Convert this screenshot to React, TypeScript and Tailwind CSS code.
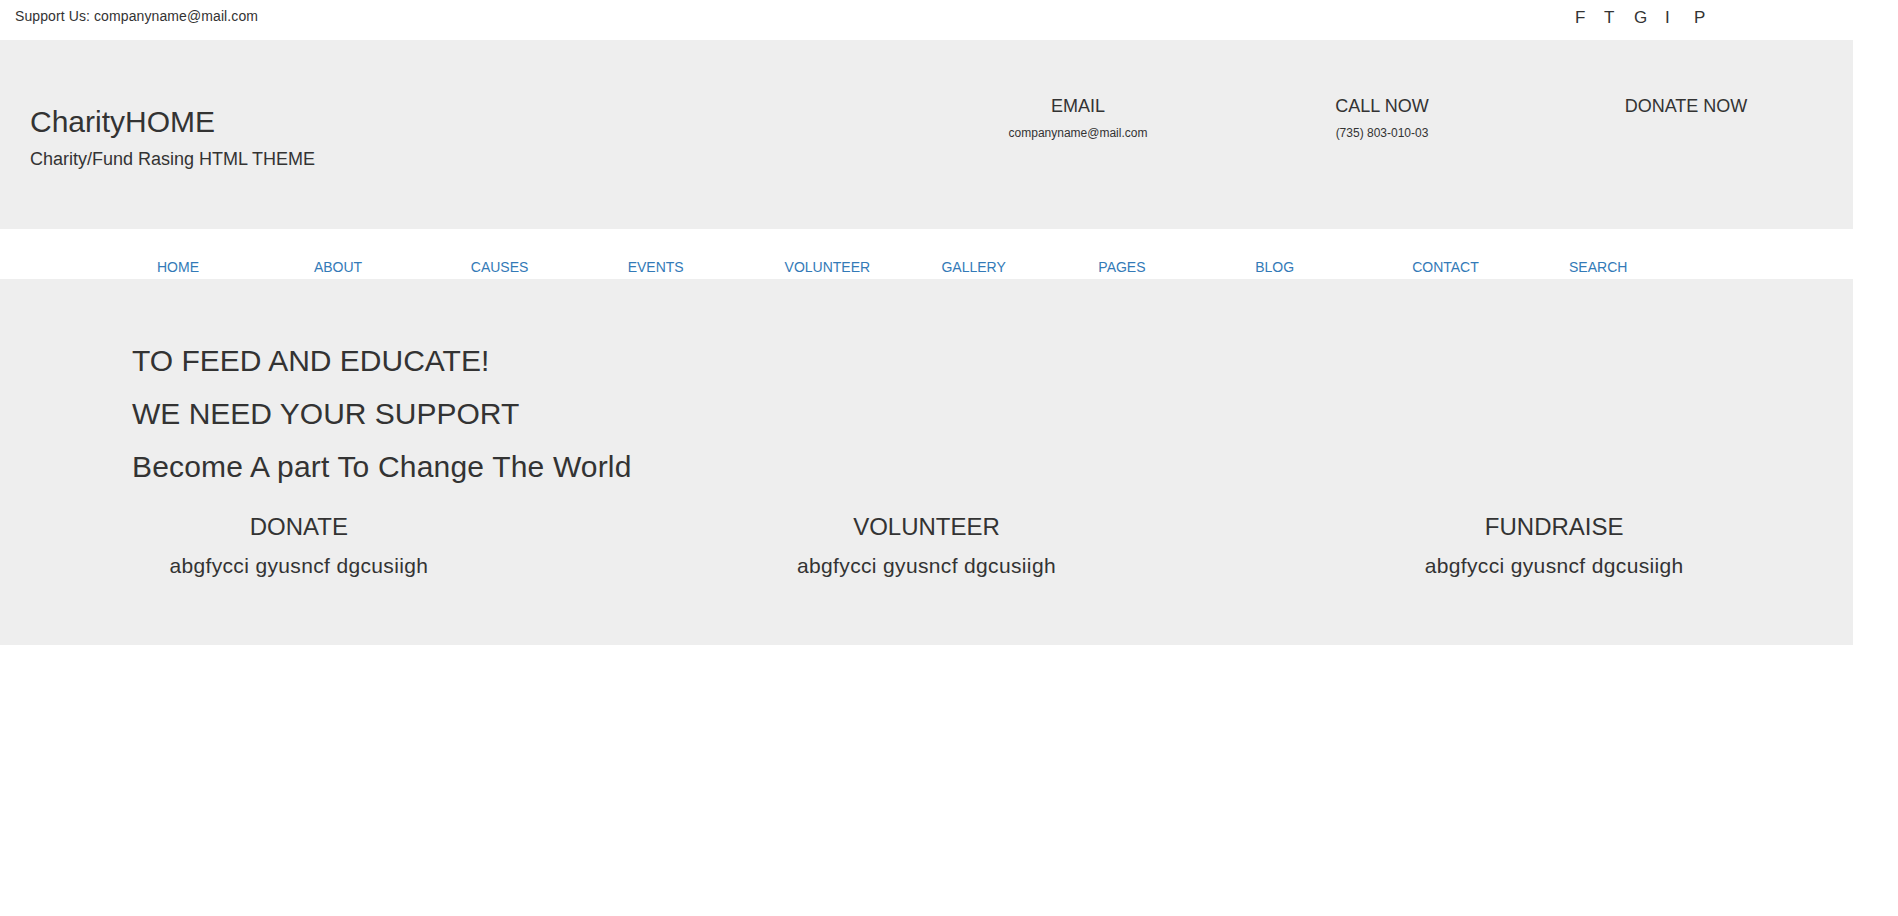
const navItems = ["HOME", "ABOUT", "CAUSES", "EVENTS", "VOLUNTEER", "GALLERY", "PAGES", "BLOG", "CONTACT", "SEARCH"]

const contacts = [
  { title: "EMAIL", sub: "companyname@mail.com" },
  { title: "CALL NOW", sub: "(735) 803-010-03" },
  { title: "DONATE NOW", sub: "" },
]

const actions = ["DONATE", "VOLUNTEER", "FUNDRAISE"]

export default function App() {
  return (
    <div className="w-[1853px] bg-white text-[#333] font-['Liberation_Sans',Arial,sans-serif]">
      {/* top bar */}
      <div className="flex h-[40px]">
        <p className="pl-[15px] pt-[6px] text-[14px] leading-[20px] tracking-[0.1px]">Support Us: companyname@mail.com</p>
        <div className="ml-[1317px] flex pt-[8px] text-[17px] leading-[20px]">
          <a className="w-[29px]">F</a>
          <a className="w-[30px]">T</a>
          <a className="w-[31px]">G</a>
          <a className="w-[29px]">I</a>
          <a>P</a>
        </div>
      </div>

      {/* header */}
      <div className="flex h-[189px] bg-[#eee]">
        <div className="flex-1 pl-[30px] pt-[65px]">
          <h1 className="text-[30px] leading-[33px]">CharityHOME</h1>
          <p className="mt-[11px] text-[18px] leading-[20px]">Charity/Fund Rasing HTML THEME</p>
        </div>
        <div className="mr-[15px] grid w-[912px] grid-cols-3 pt-[56px]">
          {contacts.map((c) => (
            <div key={c.title} className="text-center">
              <h3 className="text-[18px] leading-[20px]">{c.title}</h3>
              {c.sub && <p className="mt-[9px] text-[12px] leading-[17px]">{c.sub}</p>}
            </div>
          ))}
        </div>
      </div>

      {/* nav */}
      <nav className="h-[50px] pt-[28px]">
        <ul className="flex pl-[157px]">
          {navItems.map((item) => (
            <li key={item} className="w-[156.9px] text-[14px] leading-[20px]">
              <a className="text-[#337ab7]">{item}</a>
            </li>
          ))}
        </ul>
      </nav>

      {/* hero */}
      <section className="h-[366px] bg-[#eee] pt-[65px]">
        <div className="flex flex-col gap-[20px] pl-[132px]">
          <h2 className="text-[30px] leading-[33px]">TO FEED AND EDUCATE!</h2>
          <h2 className="text-[30px] leading-[33px]">WE NEED YOUR SUPPORT</h2>
          <h2 className="text-[30px] leading-[33px] tracking-[0.18px]">Become A part To Change The World</h2>
        </div>
        <div className="-mx-[15px] mt-[31px] grid grid-cols-3">
          {actions.map((a) => (
            <div key={a} className="px-[15px] text-center">
              <h3 className="text-[24px] leading-[26px]">{a}</h3>
              <p className="mt-[12px] text-[21px] leading-[28px] tracking-[0.35px]">abgfycci gyusncf dgcusiigh</p>
            </div>
          ))}
        </div>
      </section>
    </div>
  )
}
